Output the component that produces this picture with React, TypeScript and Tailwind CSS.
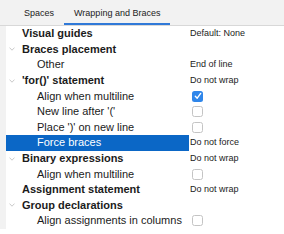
import type { ReactNode } from "react";

type Row = {
  label: string;
  level: 0 | 1;
  chevron?: boolean;
  value?: string;
  check?: boolean | null;
  selected?: boolean;
  small?: boolean;
};

const ROWS: Row[] = [
  { label: "Visual guides", level: 0, value: "Default: None" },
  { label: "Braces placement", level: 0, chevron: true },
  { label: "Other", level: 1, value: "End of line" },
  { label: "'for()' statement", level: 0, chevron: true, value: "Do not wrap" },
  { label: "Align when multiline", level: 1, check: true },
  { label: "New line after '('", level: 1, check: false },
  { label: "Place ')' on new line", level: 1, check: false },
  { label: "Force braces", level: 1, value: "Do not force", selected: true },
  { label: "Binary expressions", level: 0, chevron: true, value: "Do not wrap" },
  { label: "Align when multiline", level: 1, check: false },
  { label: "Assignment statement", level: 0, value: "Do not wrap" },
  { label: "Group declarations", level: 0, chevron: true },
  { label: "Align assignments in columns", level: 1, check: false },
];

function Chevron() {
  return (
    <svg width="6" height="4" viewBox="0 0 6 4" className="shrink-0">
      <polyline points="0.5,0.6 3,3.2 5.5,0.6" fill="none" stroke="#b2b2b2" strokeWidth="0.7" />
    </svg>
  );
}

function Checkbox({ checked }: { checked: boolean }) {
  if (checked) {
    return (
      <div className="w-[11px] h-[11px] rounded-[2.5px] bg-[#2f86ea] flex items-center justify-center">
        <svg width="8" height="8" viewBox="0 0 8 8">
          <polyline points="1.3,4.3 3.2,6.2 6.7,1.4" fill="none" stroke="white" strokeWidth="1.4" strokeLinecap="round" strokeLinejoin="round" />
        </svg>
      </div>
    );
  }
  return <div className="w-[11px] h-[11px] rounded-[2.5px] border border-[#c4c4c4] bg-white" />;
}

function Tab({ children, active }: { children: ReactNode; active?: boolean }) {
  return (
    <div
      className={
        "h-[25px] px-[10px] pt-[8px] text-[9px] leading-[11px] text-[#222] border-b-2 " +
        (active ? "border-[#3079d8]" : "border-transparent")
      }
    >
      {children}
    </div>
  );
}

export default function App() {
  return (
    <div className="w-[284px] h-[234px] overflow-hidden bg-white font-['Liberation_Sans',Arial,sans-serif]">
      <div className="flex pl-[14px] bg-[#f2f2f2] border-b border-[#d8d8d8]">
        <Tab>Spaces</Tab>
        <Tab active>Wrapping and Braces</Tab>
      </div>
      <div className="flex">
        <div className="w-[6px] shrink-0 bg-[#f2f2f2]" />
        <div className="flex-1">
          {ROWS.map((r, i) => (
            <div key={i} className="flex h-[15.6px] items-center">
              <div
                className={
                  "w-[183px] h-full flex items-center shrink-0 whitespace-nowrap " +
                  (r.selected ? "bg-[#0b67c6] text-white" : "text-[#1b1b1b]")
                }
              >
                {r.level === 0 ? (
                  <>
                    <div className="w-[16px] pl-[3px] flex items-center">{r.chevron && <Chevron />}</div>
                    <span className="text-[11px] font-bold leading-none">{r.label}</span>
                  </>
                ) : (
                  <span className="pl-[31px] text-[11px] leading-none">{r.label}</span>
                )}
              </div>
              <div className="pl-[1px] flex items-center text-[9px] leading-none text-[#1b1b1b] whitespace-nowrap">
                {r.value && <span>{r.value}</span>}
                {r.check !== undefined && r.check !== null && (
                  <div className="pl-[2px]">
                    <Checkbox checked={r.check} />
                  </div>
                )}
              </div>
            </div>
          ))}
        </div>
      </div>
    </div>
  );
}
